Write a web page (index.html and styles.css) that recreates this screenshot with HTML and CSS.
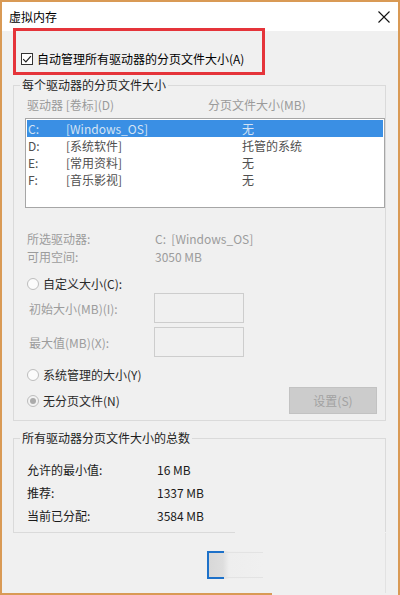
FILE: index.html
```html
<!DOCTYPE html>
<html lang="zh-CN">
<head>
<meta charset="utf-8">
<title>虚拟内存</title>
<link rel="stylesheet" href="styles.css">
</head>
<body>
<div class="window">
  <div class="titlebar">
    <span class="title">虚拟内存</span>
    <svg class="close" width="12" height="12" viewBox="0 0 12 12"><path d="M0.5 0.5 L11.5 11.5 M11.5 0.5 L0.5 11.5" stroke="#111" stroke-width="1.1" fill="none"/></svg>
  </div>
  <div class="content">
    <div class="check-row">
      <span class="checkbox"><svg width="10" height="10" viewBox="0 0 10 10"><path d="M1.2 5.2 L3.9 7.9 L8.9 2.2" stroke="#222" stroke-width="1.2" fill="none"/></svg></span>
      <span>自动管理所有驱动器的分页文件大小(A)</span>
    </div>

    <fieldset class="group group-drives">
      <legend>每个驱动器的分页文件大小</legend>
      <div class="list-head">
        <span>驱动器 [卷标](D)</span>
        <span>分页文件大小(MB)</span>
      </div>
      <div class="listbox">
        <div class="list-row selected"><span>C:</span><span>[Windows_OS]</span><span>无</span></div>
        <div class="list-row"><span>D:</span><span>[系统软件]</span><span>托管的系统</span></div>
        <div class="list-row"><span>E:</span><span>[常用资料]</span><span>无</span></div>
        <div class="list-row"><span>F:</span><span>[音乐影视]</span><span>无</span></div>
      </div>
      <div class="info">
        <div class="info-row"><span>所选驱动器:</span><span>C:&nbsp; [Windows_OS]</span></div>
        <div class="info-row"><span>可用空间:</span><span>3050 MB</span></div>
      </div>
      <div class="radio-row first">
        <span class="radio"></span><span>自定义大小(C):</span>
      </div>
      <div class="field-row first">
        <span class="field-label">初始大小(MB)(I):</span><span class="field-box"></span>
      </div>
      <div class="field-row">
        <span class="field-label">最大值(MB)(X):</span><span class="field-box"></span>
      </div>
      <div class="radio-row second">
        <span class="radio"></span><span>系统管理的大小(Y)</span>
      </div>
      <div class="radio-row last">
        <div class="radio-item"><span class="radio checked"></span><span>无分页文件(N)</span></div>
        <span class="btn-set">设置(S)</span>
      </div>
    </fieldset>

    <fieldset class="group group-total">
      <legend>所有驱动器分页文件大小的总数</legend>
      <div class="total-row"><span>允许的最小值:</span><span>16 MB</span></div>
      <div class="total-row"><span>推荐:</span><span>1337 MB</span></div>
      <div class="total-row"><span>当前已分配:</span><span>3584 MB</span></div>
    </fieldset>
    <div class="group-base"></div>

    <div class="footer">
      <span class="btn-ok"></span>
    </div>
  </div>
  <div class="bottom-edge"></div>
  <div class="annotation"></div>
</div>
</body>
</html>
```

FILE: styles.css
```css
html, body {
  margin: 0;
  padding: 0;
}

body {
  width: 400px;
  height: 595px;
  overflow: hidden;
  background: #f0f0f0;
}

.window {
  position: relative;
  width: 400px;
  height: 595px;
  box-sizing: border-box;
  border: 2px solid #d99a55;
  border-bottom: none;
  background: #f0f0f0;
  display: flex;
  flex-direction: column;
  font-family: "Noto Sans CJK SC", "Noto Sans", sans-serif;
  font-size: 12px;
  color: #1e1e1e;
}

.titlebar {
  height: 29px;
  flex: none;
  background: #ffffff;
  display: flex;
  align-items: center;
  justify-content: space-between;
  padding: 0 8px 0 7px;
}

.title {
  color: #000;
  line-height: 16px;
}

.close {
  display: block;
}

.content {
  flex: 1;
  display: flex;
  flex-direction: column;
  padding: 0 12px 0 11px;
}

.check-row {
  margin-top: 20px;
  height: 16px;
  line-height: 16px;
  display: flex;
  align-items: center;
  padding-left: 8px;
  color: #000;
}

.checkbox {
  width: 12px;
  height: 12px;
  box-sizing: border-box;
  border: 1px solid #333;
  background: #fff;
  display: flex;
  align-items: center;
  justify-content: center;
  margin-right: 4px;
}

.checkbox svg {
  display: block;
}

.group {
  margin: 0;
  border: 1px solid #dadada;
  min-width: 0;
}

.group legend {
  margin-left: 6px;
  padding: 0 2px;
  line-height: 16px;
  color: #1e1e1e;
}

.group-drives {
  margin-top: 10px;
  padding: 4px 0 6px 0;
}

.list-head {
  display: grid;
  grid-template-columns: 181px 1fr;
  padding-left: 13px;
  line-height: 16px;
  color: #9a9a9a;
}

.listbox {
  margin: 5px 0 0 11px;
  width: 360px;
  height: 90px;
  box-sizing: border-box;
  border: 1px solid #a6a6a6;
  background: #fff;
  padding: 1px;
}

.list-row {
  display: grid;
  grid-template-columns: 38px 176px 1fr;
  padding-left: 1px;
  height: 17px;
  line-height: 17px;
  color: #505050;
}

.list-row.selected {
  background: #3a8fe4;
  color: #d4e3f4;
}

.info {
  margin-top: 22px;
}

.info-row {
  display: grid;
  grid-template-columns: 128px 1fr;
  padding-left: 13px;
  line-height: 18px;
  color: #9c9c9c;
}

.radio-row {
  display: flex;
  align-items: center;
  padding-left: 13px;
  height: 16px;
  line-height: 16px;
  color: #2a2a2a;
}

.radio-row.first {
  margin-top: 10px;
}

.radio-row.second {
  margin-top: 10px;
}

.radio-row.last {
  margin-top: 4px;
  height: 27px;
  justify-content: space-between;
  padding-right: 8px;
}

.radio-item {
  display: flex;
  align-items: center;
}

.radio {
  width: 12px;
  height: 12px;
  box-sizing: border-box;
  border-radius: 50%;
  border: 1px solid #bdbdbd;
  background: #fbfbfb;
  margin-right: 4px;
  flex: none;
  display: flex;
  align-items: center;
  justify-content: center;
}

.radio.checked {
  background: #f2f2f2;
}

.radio.checked::after {
  content: "";
  width: 6px;
  height: 6px;
  border-radius: 50%;
  background: #ababab;
}

.field-row {
  display: flex;
  align-items: center;
  padding-left: 15px;
  height: 30px;
  margin-top: 4px;
  color: #9c9c9c;
}

.field-row.first {
  margin-top: 1px;
}

.field-label {
  width: 125px;
  line-height: 16px;
  padding-top: 2px;
}

.field-box {
  width: 90px;
  height: 30px;
  box-sizing: border-box;
  border: 1px solid #cdcdcd;
  background: #f0f0f0;
}

.btn-set {
  width: 88px;
  height: 27px;
  box-sizing: border-box;
  border: 1px solid #c2c2c2;
  background: #cccccc;
  color: #a2a2a2;
  display: flex;
  align-items: center;
  justify-content: center;
  line-height: 16px;
}

.group-total {
  margin-top: 9px;
  padding: 12px 0 5px 0;
  border-bottom-width: 0;
}

.total-row {
  display: grid;
  grid-template-columns: 130px 1fr;
  padding-left: 13px;
  line-height: 23px;
  color: #1a1a1a;
}

.group-base {
  width: 222px;
  height: 0;
  border-top: 1px solid #dadada;
}

.footer {
  flex: 1;
  border-right: 1px solid #e2e2e2;
  padding-top: 18px;
}

.btn-ok {
  display: block;
  margin-left: 194px;
  width: 56px;
  height: 28px;
  box-sizing: border-box;
  border-left: 2px solid #1d71c9;
  background:
    linear-gradient(#1d71c9, #1d71c9) no-repeat 0 0 / 15px 2px,
    linear-gradient(#1d71c9, #1d71c9) no-repeat 0 100% / 15px 2px,
    linear-gradient(#e3e3e3, #e3e3e3) no-repeat 0 1px / 100% 1px,
    linear-gradient(#e3e3e3, #e3e3e3) no-repeat 0 calc(100% - 1px) / 100% 1px,
    linear-gradient(to right, #d8d8d8 0, #dedede 14px, #eeeeee 20px, #f0f0f0 100%);
}

.bottom-edge {
  flex: none;
  width: 270px;
  height: 2px;
  background: #d99a55;
}

.annotation {
  position: absolute;
  left: 11px;
  top: 26px;
  width: 252px;
  height: 47px;
  box-sizing: border-box;
  border: 3px solid #e5343a;
  pointer-events: none;
}
```
